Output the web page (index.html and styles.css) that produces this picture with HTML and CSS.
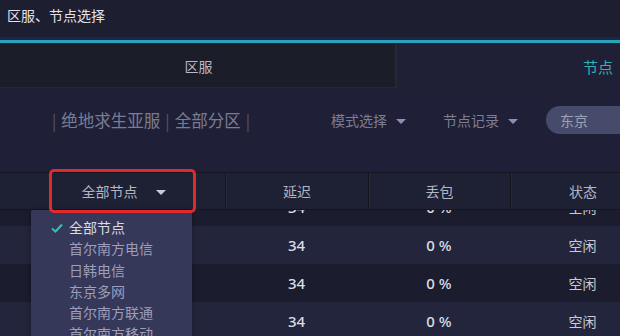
FILE: index.html
```html
<!DOCTYPE html>
<html lang="zh-CN">
<head>
<meta charset="utf-8">
<title>区服、节点选择</title>
<link rel="stylesheet" href="styles.css">
</head>
<body>
<div class="app">
  <header class="titlebar">区服、节点选择</header>
  <div class="accent"></div>
  <nav class="tabs">
    <div class="tab tab-inactive">区服</div>
    <div class="tab tab-active">节点</div>
  </nav>
  <section class="filters">
    <div class="crumbs"><span class="bar">|</span>绝地求生亚服<span class="bar">|</span>全部分区<span class="bar">|</span></div>
    <div class="select select-mode">模式选择<span class="caret"></span></div>
    <div class="select select-record">节点记录<span class="caret"></span></div>
    <div class="search">东京</div>
  </section>
  <section class="table">
    <div class="thead">
      <div class="cell cell-node">全部节点<span class="caret caret-light"></span></div>
      <div class="cell">延迟</div>
      <div class="cell">丢包</div>
      <div class="cell">状态</div>
    </div>
    <div class="tbody">
      <div class="rows">
        <div class="row row-dark"><div class="cell cell-node"></div><div class="cell num">34</div><div class="cell num">0 %</div><div class="cell">空闲</div></div>
        <div class="row row-light"><div class="cell cell-node"></div><div class="cell num">34</div><div class="cell num">0 %</div><div class="cell">空闲</div></div>
        <div class="row row-dark"><div class="cell cell-node"></div><div class="cell num">34</div><div class="cell num">0 %</div><div class="cell">空闲</div></div>
        <div class="row row-light"><div class="cell cell-node"></div><div class="cell num">34</div><div class="cell num">0 %</div><div class="cell">空闲</div></div>
      </div>
    </div>
    <ul class="dropdown">
      <li class="item item-selected"><svg class="check" viewBox="0 0 12 10" width="12" height="10"><path d="M1 5.5 L4.5 8.5 L11 1.5" fill="none" stroke="#2ec4b6" stroke-width="2"/></svg>全部节点</li>
      <li class="item">首尔南方电信</li>
      <li class="item">日韩电信</li>
      <li class="item">东京多网</li>
      <li class="item">首尔南方联通</li>
      <li class="item">首尔南方移动</li>
    </ul>
    <div class="highlight"></div>
  </section>
</div>
</body>
</html>
```
FILE: styles.css
```css
* { box-sizing: border-box; }
html, body { margin: 0; padding: 0; }
body {
  width: 620px;
  height: 336px;
  overflow: hidden;
  background: #1f2037;
  font-family: "Noto Sans CJK SC", "Noto Sans", sans-serif;
  font-size: 14px;
}
.app { width: 620px; height: 336px; display: flex; flex-direction: column; overflow: hidden; }

.titlebar {
  flex-shrink: 0;
  height: 37px;
  background: #1e1e31;
  color: #e2e2ea;
  padding: 0 0 0 7px;
  line-height: 31px;
  font-size: 14px;
}
.accent {
  flex-shrink: 0;
  height: 7px;
  background: linear-gradient(#18284a 0 3px, #2aa2bc 3px 5.5px, #132a4a 5.5px);
}
.tabs {
  flex-shrink: 0;
  height: 44px;
  display: grid;
  grid-template-columns: 397px 1fr;
  background: #1f2036;
}
.tab { display: flex; align-items: center; line-height: 1; }
.tab-inactive {
  background: #1b1d29;
  border-right: 2px solid #262838;
  border-bottom: 1px solid #24263a;
  justify-content: center;
  color: #b8bac8;
  padding-left: 2px;
}
.tab-active {
  color: #34b0b4;
  padding-left: 186px;
  font-size: 15px;
}

.filters {
  flex-shrink: 0;
  height: 84px;
  display: flex;
  align-items: center;
  padding-left: 52px;
  padding-bottom: 20px;
  color: #7e8094;
  background: #1f2038;
}
.crumbs { font-size: 16.5px; color: #7a7c90; display: flex; align-items: center; }
.bar { color: #55576b; margin: 0 5px; font-size: 16px; }
.bar:first-child { margin-left: 0; }
.select { display: flex; align-items: center; color: #7c7e92; font-size: 14px; }
.select-mode { margin-left: 76px; }
.select-record { margin-left: 37px; }
.caret {
  width: 0; height: 0;
  border-left: 5px solid transparent;
  border-right: 5px solid transparent;
  border-top: 5px solid #8a90b8;
  margin-left: 9px;
  margin-top: 2px;
}
.caret-light { border-top-color: #c8cad8; margin-left: 18px; }
.search {
  margin-left: 28px;
  flex: 1;
  height: 28px;
  border-radius: 14px 0 0 14px;
  background: #464b6b;
  color: #9ea2b8;
  display: flex;
  align-items: center;
  padding-left: 14px;
}

.table { position: relative; flex: 1; min-height: 0; display: flex; flex-direction: column; }
.thead {
  flex-shrink: 0;
  height: 38px;
  display: grid;
  grid-template-columns: 225px 143px 142px 145px;
  background: #1e2034;
  border-top: 1px solid #14151f;
  border-bottom: 1px solid #14151f;
  color: #b4b6c4;
}
.thead .cell { border-left: 1px solid #14151f; box-shadow: inset 1px 0 0 #262840; }
.thead .cell:first-child { border-left: none; box-shadow: none; }
.cell { display: flex; align-items: center; justify-content: center; }
.cell-node { padding-left: 22px; }
.tbody { flex: 1; min-height: 0; overflow: hidden; }
.rows { margin-top: -22px; }
.row {
  height: 38px;
  display: grid;
  grid-template-columns: 225px 143px 142px 145px;
  color: #cacbd6;
}
.row-dark { background: #1b1c2d; }
.row-light { background: #23253d; }
.num { font-weight: 500; color: #dcdde6; font-family: "Noto Sans", sans-serif; font-size: 15px; }

.dropdown {
  position: absolute;
  left: 31px;
  top: 38px;
  width: 161px;
  height: 140px;
  margin: 0;
  padding: 7px 0 0 0;
  list-style: none;
  background: #36385a;
  box-shadow: 0 2px 6px rgba(0,0,0,0.35);
  border-radius: 2px;
}
.item {
  height: 21.3px;
  line-height: 21px;
  padding-left: 38px;
  color: #9c9eba;
  position: relative;
  white-space: nowrap;
}
.item-selected { color: #d8dae6; }
.check { position: absolute; left: 20px; top: 6px; }

.highlight {
  position: absolute;
  left: 49px;
  top: -3px;
  width: 147px;
  height: 44px;
  border: 3px solid #e3292b;
  border-radius: 5px;
}
```
